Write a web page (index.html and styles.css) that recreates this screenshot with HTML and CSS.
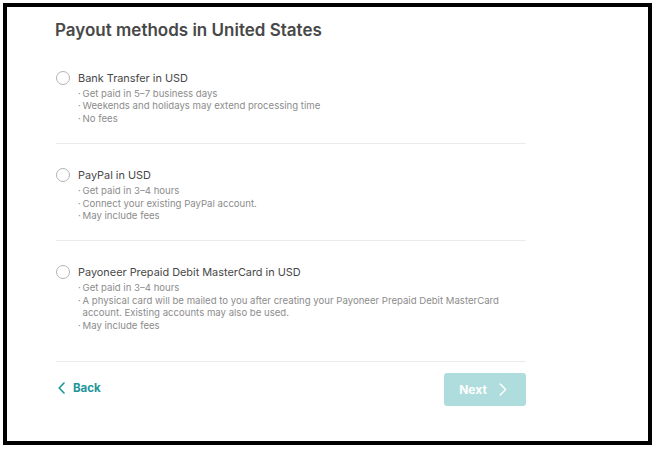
FILE: index.html
```html
<!DOCTYPE html>
<html lang="en">
<head>
<meta charset="utf-8">
<title>Payout methods</title>
<link rel="stylesheet" href="styles.css">
</head>
<body>
<div class="frame">
  <div class="content">
    <h1 class="title">Payout methods in United States</h1>

    <div class="option">
      <div class="option-head"><span class="radio"></span><span class="option-name">Bank Transfer in USD</span></div>
      <ul class="details">
        <li><span class="dot">·</span><span>Get paid in 5–7 business days</span></li>
        <li><span class="dot">·</span><span>Weekends and holidays may extend processing time</span></li>
        <li><span class="dot">·</span><span>No fees</span></li>
      </ul>
    </div>

    <div class="option">
      <div class="option-head"><span class="radio"></span><span class="option-name">PayPal in USD</span></div>
      <ul class="details">
        <li><span class="dot">·</span><span>Get paid in 3–4 hours</span></li>
        <li><span class="dot">·</span><span>Connect your existing PayPal account.</span></li>
        <li><span class="dot">·</span><span>May include fees</span></li>
      </ul>
    </div>

    <div class="option option-last">
      <div class="option-head"><span class="radio"></span><span class="option-name">Payoneer Prepaid Debit MasterCard in USD</span></div>
      <ul class="details">
        <li><span class="dot">·</span><span>Get paid in 3–4 hours</span></li>
        <li><span class="dot">·</span><span>A physical card will be mailed to you after creating your Payoneer Prepaid Debit MasterCard account. Existing accounts may also be used.</span></li>
        <li><span class="dot">·</span><span>May include fees</span></li>
      </ul>
    </div>

    <div class="footer">
      <a class="back" href="#">
        <svg class="chev" width="7" height="12" viewBox="0 0 7 12"><path d="M6 1 L1.2 6 L6 11" fill="none" stroke="currentColor" stroke-width="1.6" stroke-linecap="round" stroke-linejoin="round"/></svg>
        <span>Back</span>
      </a>
      <button class="next" type="button">
        <span>Next</span>
        <svg class="chev" width="8" height="13" viewBox="0 0 8 13"><path d="M1.2 1 L6.6 6.5 L1.2 12" fill="none" stroke="currentColor" stroke-width="1.4" stroke-linecap="round" stroke-linejoin="round"/></svg>
      </button>
    </div>
  </div>
</div>
</body>
</html>
```
FILE: styles.css
```css
* { box-sizing: border-box; }
body {
  margin: 0;
  background: #ffffff;
  font-family: Inter, "Open Sans", "Liberation Sans", sans-serif;
  color: #484848;
}
.frame {
  margin: 3px;
  width: 649px;
  height: 442px;
  border: 4px solid #000;
  padding: 11px 0 0 49px;
  background: #fff;
}
.content {
  width: 470px;
  display: flex;
  flex-direction: column;
}
.title {
  margin: 0 0 26px -1px;
  font-size: 17px;
  line-height: 24px;
  font-weight: 600;
  color: #484848;
}
.option {
  padding: 0 0 18px 0;
  border-bottom: 1px solid #ebebeb;
  margin-bottom: 21px;
}
.option-last {
  padding-bottom: 29px;
  margin-bottom: 11px;
}
.option-head {
  display: flex;
  align-items: center;
  height: 20px;
}
.radio {
  width: 14px;
  height: 14px;
  border: 1px solid #b4b4b4;
  border-radius: 50%;
  margin-right: 8px;
  flex: none;
}
.option-name {
  font-size: 10.9px;
  font-weight: 400;
  color: #484848;
}
.details {
  list-style: none;
  margin: 0;
  padding: 0 0 0 22px;
  font-size: 9.6px;
  line-height: 12.4px;
  color: #8c8c8c;
}
.details li {
  display: flex;
}
.dot {
  flex: none;
  width: 4.5px;
}
.footer {
  display: flex;
  align-items: center;
  justify-content: space-between;
}
.back {
  display: flex;
  align-items: center;
  gap: 8px;
  color: #1b9598;
  text-decoration: none;
  font-size: 11.5px;
  font-weight: 700;
  margin-left: 2px;
  margin-top: -3px;
}
.next {
  width: 82px;
  height: 33px;
  border: none;
  border-radius: 3px;
  background: #afdcdc;
  color: #ffffff;
  font-family: inherit;
  font-size: 12px;
  font-weight: 700;
  display: flex;
  align-items: center;
  justify-content: center;
  gap: 12px;
  padding: 0 4px 0 0;
}
```
